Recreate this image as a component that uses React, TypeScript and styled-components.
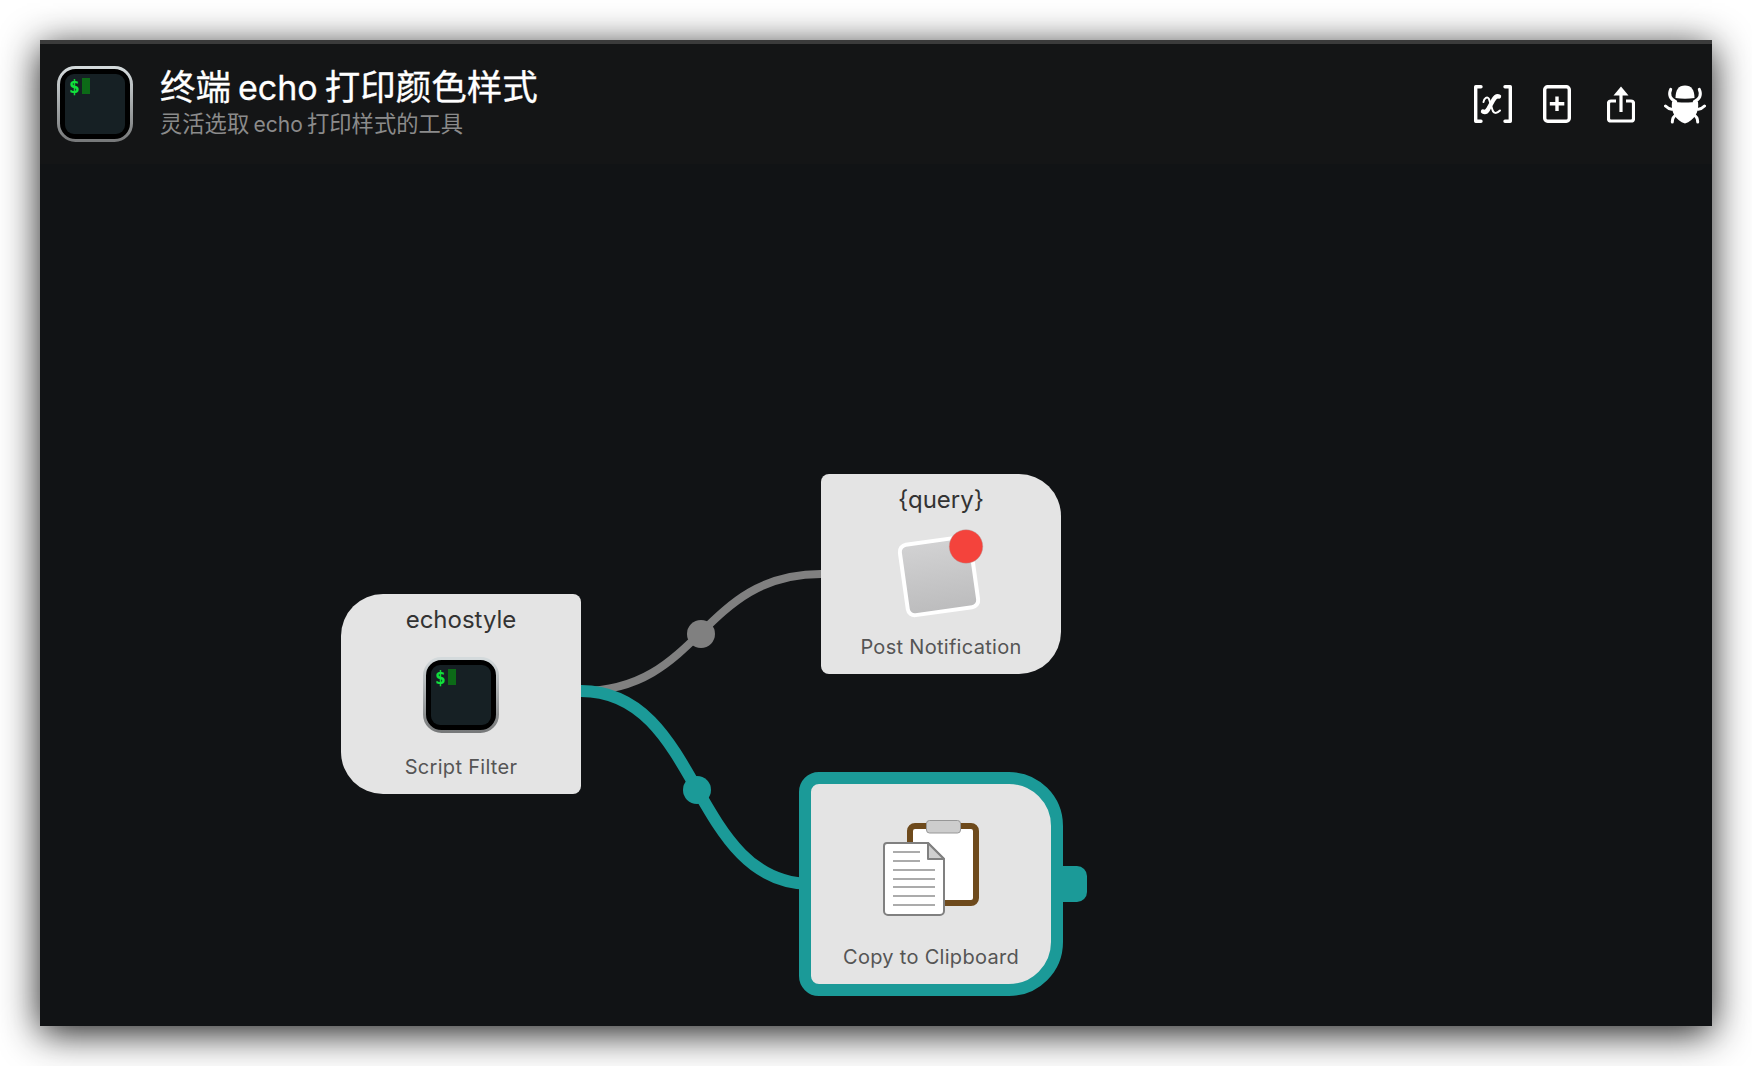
import styled, { createGlobalStyle } from 'styled-components';

const GlobalStyle = createGlobalStyle`
  html, body {
    margin: 0;
    background: #ffffff;
  }
`;

const Page = styled.div`
  width: 1752px;
  height: 1066px;
  padding: 40px;
  box-sizing: border-box;
  overflow: hidden;
`;

const Window = styled.div`
  display: flex;
  flex-direction: column;
  width: 1672px;
  height: 986px;
  border-top: 4px solid #3b3b3b;
  box-sizing: border-box;
  background: #111315;
  box-shadow: 0 7px 36px rgba(0, 0, 0, 0.9);
`;

const Header = styled.header`
  display: flex;
  align-items: flex-start;
  gap: 27px;
  height: 120px;
  padding: 22px 5px 0 17px;
  box-sizing: border-box;
  background: #141516;
`;

const TitleBlock = styled.div`
  display: flex;
  flex-direction: column;
  flex: 1;
`;

const Title = styled.h1`
  margin: 0;
  padding-top: 1px;
  font: 400 35.5px/42px Inter, "Noto Sans CJK SC", sans-serif;
  -webkit-text-stroke: 0.3px #ffffff;
  word-spacing: -3px;
  color: #ffffff;
`;

const Subtitle = styled.p`
  margin: 0;
  font: 400 22.3px/30px Inter, "Noto Sans CJK SC", sans-serif;
  word-spacing: -2px;
  color: #8b8b8b;
`;

const Latin = styled.span<{ $size: number }>`
  font-size: ${(p) => p.$size}px;
`;

const Toolbar = styled.div`
  display: flex;
  gap: 20px;
  padding-top: 18px;
`;

const ToolButton = styled.div`
  display: flex;
  justify-content: center;
  align-items: center;
  width: 44px;
  height: 40px;
`;

const Canvas = styled.main`
  position: relative;
  flex: 1;
`;

const Wires = styled.svg`
  position: absolute;
  left: 0;
  top: 0;
`;

const Node = styled.div<{ $x: number; $y: number; $flip?: boolean; $selected?: boolean }>`
  position: absolute;
  left: ${(p) => p.$x}px;
  top: ${(p) => p.$y}px;
  display: flex;
  flex-direction: column;
  align-items: center;
  width: 240px;
  height: 200px;
  padding-top: 12px;
  box-sizing: ${(p) => (p.$selected ? 'content-box' : 'border-box')};
  background: #e4e4e4;
  border-radius: ${(p) => {
    const big = p.$selected ? 54 : 42;
    const small = p.$selected ? 20 : 8;
    return p.$flip ? `${small}px ${big}px ${big}px ${small}px` : `${big}px ${small}px ${small}px ${big}px`;
  }};
  ${(p) => p.$selected && `
    height: 188px;
    border: 12px solid #1b9a98;
  `}
`;

const NodeTitle = styled.div`
  font: 400 24px/28px Inter, sans-serif;
  color: #333333;
`;

const NodeIcon = styled.div`
  display: flex;
  flex: 1;
  justify-content: center;
  align-items: center;
`;

const NodeLabel = styled.div`
  margin-bottom: 15px;
  font: 400 20px/24px Inter, sans-serif;
  letter-spacing: 0.3px;
  color: #555555;
`;

const Port = styled.div`
  position: absolute;
  left: calc(100% + 12px);
  top: 82px;
  width: 24px;
  height: 36px;
  border-radius: 0 10px 10px 0;
  background: #1b9a98;
`;

const TerminalIcon = () => (
  <svg width="76" height="76" viewBox="0 0 76 76">
    <defs>
      <linearGradient id="termEdge" x1="0" y1="0" x2="0" y2="1">
        <stop offset="0" stopColor="#d4dadc" />
        <stop offset="1" stopColor="#77797a" />
      </linearGradient>
    </defs>
    <rect x="1.5" y="1.5" width="73" height="73" rx="17" fill="#000000" stroke="url(#termEdge)" strokeWidth="3" />
    <rect x="8" y="8" width="60" height="60" rx="9" fill="#162024" />
    <text x="12" y="27" fill="#10e23c" fontFamily="'DejaVu Sans Mono', monospace" fontWeight="700" fontSize="18">$</text>
    <rect x="25" y="12" width="8" height="16" fill="#0c6a17" />
  </svg>
);

const NotificationIcon = () => (
  <svg width="88" height="88" viewBox="0 0 88 88" overflow="visible">
    <defs>
      <linearGradient id="noteFill" x1="0" y1="0" x2="0" y2="1">
        <stop offset="0" stopColor="#d2d2d3" />
        <stop offset="1" stopColor="#bcbcbd" />
      </linearGradient>
    </defs>
    <rect x="6.500" y="9.500" width="71" height="71" rx="7" fill="url(#noteFill)" stroke="#ffffff" strokeWidth="4" transform="rotate(-8 42 45)" />
    <circle cx="69" cy="15.500" r="16.800" fill="#f4433c" stroke="#a8a8a8" strokeWidth="0.4" />
  </svg>
);

const ClipboardIcon = () => (
  <svg width="96" height="96" viewBox="0 0 96 96" style={{ marginBottom: 5 }}>
    <rect x="27" y="6" width="66" height="77" rx="5" fill="#ffffff" stroke="#6e4a1c" strokeWidth="6" />
    <rect x="43.500" y="0.500" width="34" height="12.500" rx="3" fill="#cdcdcd" stroke="#979797" />
    <path d="M4 23h41l16 16v52a4 4 0 0 1-4 4H5a4 4 0 0 1-4-4V26a3 3 0 0 1 3-3z" fill="#ffffff" stroke="#808080" strokeWidth="2" />
    <path d="M45 23l16 16H45z" fill="#cfcfcf" stroke="#808080" strokeWidth="2" strokeLinejoin="round" />
    <path d="M10 32h27M10 41h27M10 50h42M10 59h42M10 67h42M10 76h42M10 85h42" stroke="#ababab" strokeWidth="2" />
  </svg>
);

const VariableIcon = () => (
  <svg width="38" height="38" viewBox="0 0 38 38" fill="none" stroke="#ffffff" strokeLinecap="round" strokeLinejoin="round">
    <path d="M7 1.700H1.700v34.600H7M31 1.700h5.300v34.600H31" strokeWidth="3.400" />
    <path d="M9.500 17c.5-4 4-6 5.500-3l3.500 11c1 3.500 4 4 7.500.5" strokeWidth="2" />
    <path d="M25 11.500c-2.500-1-4 .5-6 4l-5 9c-1.500 2.500-3 3-5 2" strokeWidth="4.400" />
  </svg>
);

const AddIcon = () => (
  <svg width="28" height="38" viewBox="0 0 28 38" fill="none" stroke="#ffffff" strokeWidth="3.400">
    <rect x="1.700" y="1.700" width="24.600" height="34.600" rx="3" />
    <path d="M14 11.500v14.500M6.800 18.800h14.500" />
  </svg>
);

const ShareIcon = () => (
  <svg width="28" height="37" viewBox="0 0 28 37" fill="none" stroke="#ffffff" strokeWidth="3.200">
    <path d="M9 15H4a2.500 2.500 0 0 0-2.500 2.500v15A2.500 2.500 0 0 0 4 35h20a2.500 2.500 0 0 0 2.500-2.500v-15A2.500 2.500 0 0 0 24 15h-5" />
    <path d="M14 8v18" />
    <path d="M14 .5l7.500 9h-15z" fill="#ffffff" stroke="none" />
  </svg>
);

const BugIcon = () => (
  <svg width="42" height="39" viewBox="0 0 42 39" fill="none" stroke="#ffffff" strokeWidth="3" strokeLinecap="round">
    <path d="M11.500 13c0-8 3-12.500 9.500-12.500s9.500 4.500 9.500 12.500c-6 1-13 1-19 0z" fill="#ffffff" stroke="none" />
    <path d="M8 16.500c8 1.300 18 1.300 26 0 1.500 11-4 19-13 22-9-3-14.500-11-13-22z" fill="#ffffff" stroke="none" />
    <path d="M6.700 4.300c-2.500 5.500-.5 10 5 12.400M35.300 4.300c2.500 5.500.5 10-5 12.400" />
    <path d="M1.500 21c3 3 6 4 9 2.500M40.500 21c-3 3-6 4-9 2.500" />
    <path d="M8.300 37c0-4 2-6.500 5-8M33.700 37c0-4-2-6.500-5-8" />
  </svg>
);

const App = () => {
  return (
    <>
      <GlobalStyle />
      <Page>
        <Window>
          <Header>
            <TerminalIcon />
            <TitleBlock>
              <Title>终端 <Latin $size={34}>echo</Latin> 打印颜色样式</Title>
              <Subtitle>灵活选取 <Latin $size={21}>echo</Latin> 打印样式的工具</Subtitle>
            </TitleBlock>
            <Toolbar>
              <ToolButton><VariableIcon /></ToolButton>
              <ToolButton><AddIcon /></ToolButton>
              <ToolButton><ShareIcon /></ToolButton>
              <ToolButton><BugIcon /></ToolButton>
            </Toolbar>
          </Header>
          <Canvas>
            <Wires width="1672" height="862" fill="none">
              <path d="M541 527C661 527 661 410 781 410" stroke="#808080" strokeWidth="8" />
              <circle cx="661" cy="470" r="14" fill="#808080" />
              <path d="M541 527C661 527 651 720 771 720" stroke="#1b9a98" strokeWidth="12" />
              <circle cx="657" cy="626" r="14" fill="#1b9a98" />
            </Wires>
            <Node $x={301} $y={430}>
              <NodeTitle>echostyle</NodeTitle>
              <NodeIcon><TerminalIcon /></NodeIcon>
              <NodeLabel>Script Filter</NodeLabel>
            </Node>
            <Node $x={781} $y={310} $flip>
              <NodeTitle>{'{query}'}</NodeTitle>
              <NodeIcon><NotificationIcon /></NodeIcon>
              <NodeLabel>Post Notification</NodeLabel>
            </Node>
            <Node $x={759} $y={608} $flip $selected>
              <NodeIcon><ClipboardIcon /></NodeIcon>
              <NodeLabel>Copy to Clipboard</NodeLabel>
              <Port />
            </Node>
          </Canvas>
        </Window>
      </Page>
    </>
  );
};

export default App;
